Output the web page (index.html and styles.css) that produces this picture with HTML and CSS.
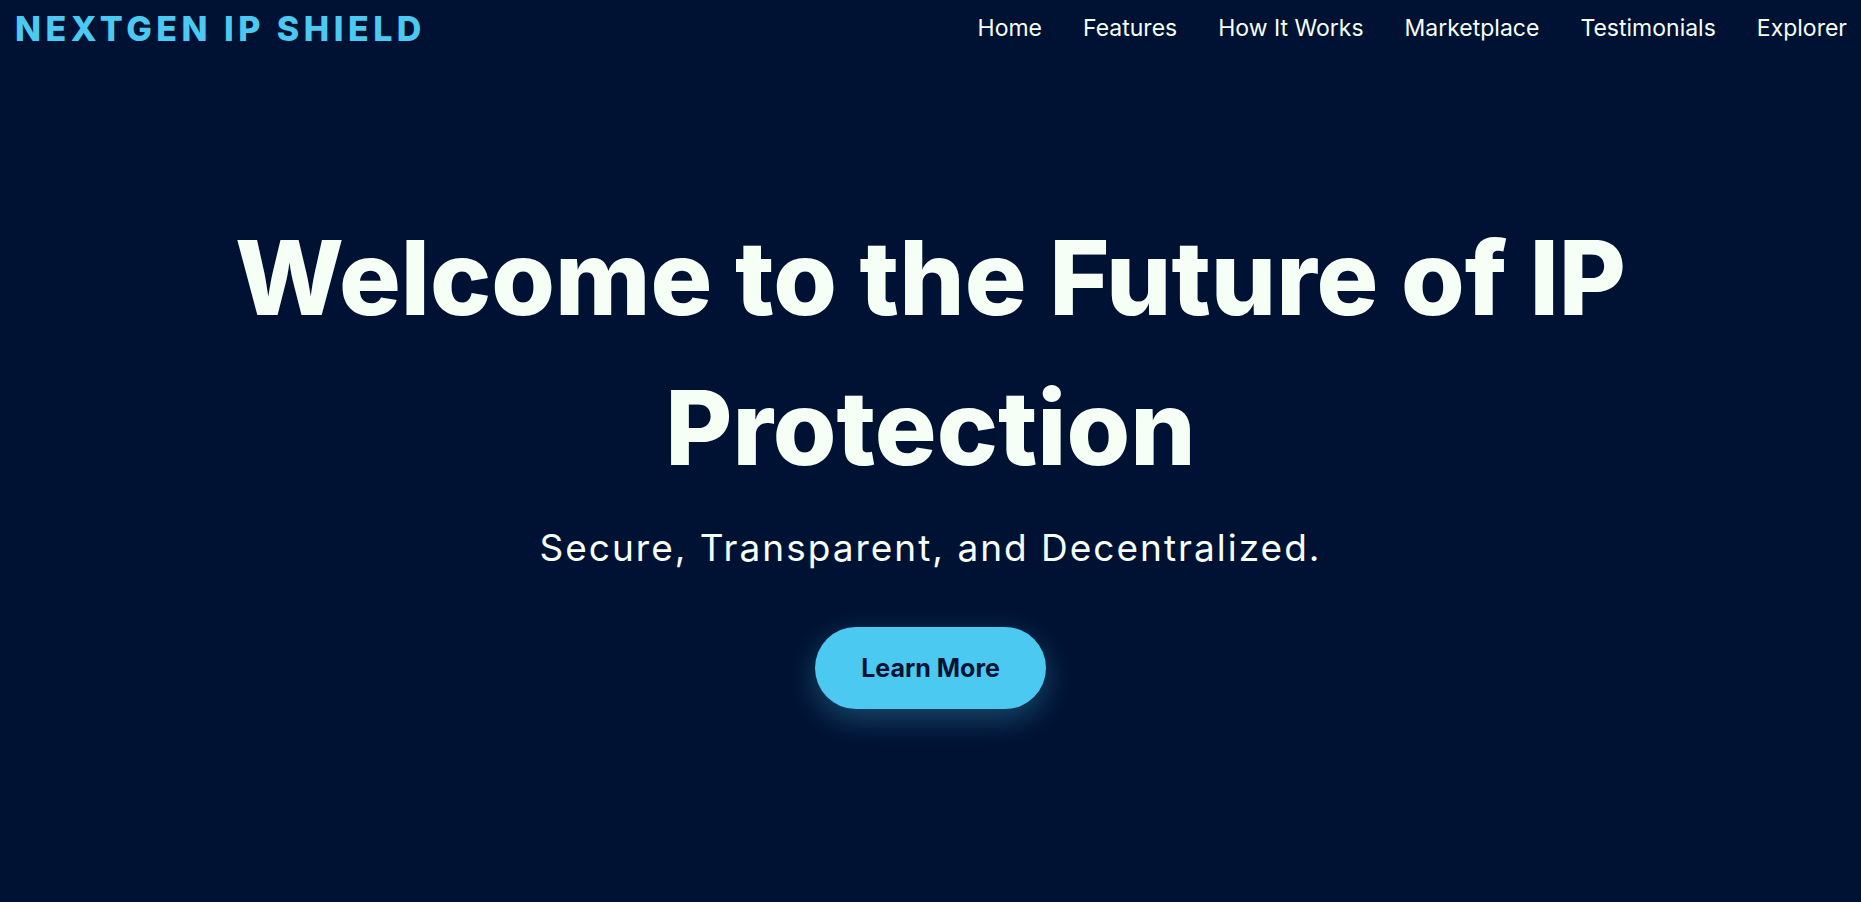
FILE: index.html
```html
<!DOCTYPE html>
<html lang="en">
<head>
<meta charset="utf-8">
<title>NextGen IP Shield</title>
<link rel="stylesheet" href="styles.css">
</head>
<body>
<header class="site-header">
  <div class="logo">NEXTGEN IP SHIELD</div>
  <nav class="nav">
    <a href="#" class="nav-link">Home</a>
    <a href="#" class="nav-link">Features</a>
    <a href="#" class="nav-link">How It Works</a>
    <a href="#" class="nav-link">Marketplace</a>
    <a href="#" class="nav-link">Testimonials</a>
    <a href="#" class="nav-link">Explorer</a>
  </nav>
</header>
<section class="hero">
  <h1 class="hero-title">Welcome to the Future of IP<br>Protection</h1>
  <p class="hero-sub">Secure, Transparent, and Decentralized.</p>
  <a href="#" class="btn">Learn More</a>
</section>
</body>
</html>
```
FILE: styles.css
```css
* { box-sizing: border-box; }
html, body { margin: 0; padding: 0; }
body {
  background: #001233;
  color: #f5fff6;
  font-family: Inter, "Noto Sans", sans-serif;
  height: 902px;
  overflow: hidden;
}
.site-header {
  display: flex;
  justify-content: space-between;
  align-items: center;
  height: 56px;
  padding: 0 14px 0 15px;
}
.logo {
  font-family: Inter, sans-serif;
  font-weight: 800;
  font-size: 34px;
  letter-spacing: 4.5px;
  color: #4cc9f0;
}
.nav {
  display: flex;
  gap: 41px;
}
.nav-link {
  color: #f5fff6;
  text-decoration: none;
  font-size: 23px;
  font-weight: 400;
}
.hero {
  display: flex;
  flex-direction: column;
  align-items: center;
  text-align: center;
  padding-top: 147px;
}
.hero-title {
  margin: 0;
  font-family: Inter, sans-serif;
  font-weight: 800;
  font-size: 103px;
  line-height: 150px;
  color: #f5fff6;
}
.hero-sub {
  margin: 25px 0 0;
  font-size: 37px;
  letter-spacing: 2px;
  line-height: 40px;
  font-weight: 400;
}
.btn {
  margin-top: 59px;
  display: inline-flex;
  align-items: center;
  justify-content: center;
  width: 231px;
  height: 82px;
  border-radius: 41px;
  background: #4cc9f0;
  color: #001233;
  font-weight: 700;
  font-size: 25px;
  text-decoration: none;
  box-shadow: 0 10px 30px rgba(76, 201, 240, 0.3);
}
```
